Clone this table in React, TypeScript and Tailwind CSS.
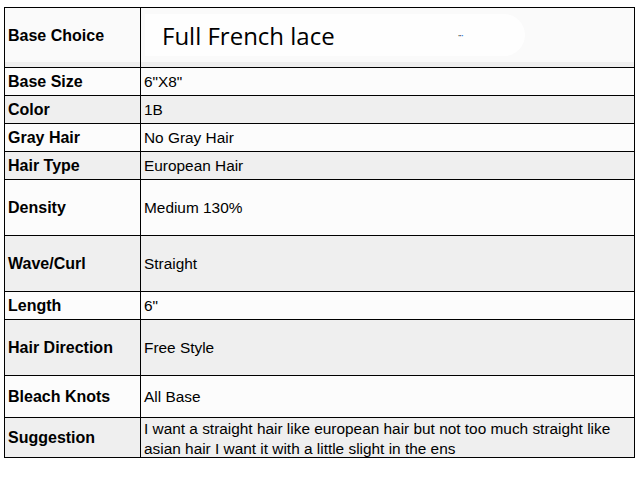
import React from "react";

type Row = { label: string; value: string; h: string; bg: string };

const rows: Row[] = [
  { label: "Base Size", value: "6\"X8\"", h: "h-[28px]", bg: "bg-[#fcfcfc]" },
  { label: "Color", value: "1B", h: "h-[28px]", bg: "bg-[#efefef]" },
  { label: "Gray Hair", value: "No Gray Hair", h: "h-[28px]", bg: "bg-[#fcfcfc]" },
  { label: "Hair Type", value: "European Hair", h: "h-[28px]", bg: "bg-[#efefef]" },
  { label: "Density", value: "Medium 130%", h: "h-[56px]", bg: "bg-[#fcfcfc]" },
  { label: "Wave/Curl", value: "Straight", h: "h-[56px]", bg: "bg-[#efefef]" },
  { label: "Length", value: "6\"", h: "h-[28px]", bg: "bg-[#fcfcfc]" },
  { label: "Hair Direction", value: "Free Style", h: "h-[56px]", bg: "bg-[#efefef]" },
  { label: "Bleach Knots", value: "All Base", h: "h-[42px]", bg: "bg-[#fcfcfc]" },
];

function App() {
  return (
    <div className="w-[638px] h-[484px] bg-white pt-[7px] pl-[4px] font-['Liberation_Sans',Arial,sans-serif] text-[16px] text-black">
      <div className="w-[631px] border-t border-l border-r border-black">
        {/* first row: base choice */}
        <div className="flex h-[60px] border-b border-black bg-[#fafafa]">
          <div className="w-[136px] shrink-0 border-r border-black flex flex-col">
            <div className="flex-1 flex items-center pl-[3px] pt-[1px] font-bold">Base Choice</div>
            <div className="h-[5px] bg-[#efefef]" />
          </div>
          <div className="flex-1 flex flex-col">
            <div className="flex-1 flex items-center pl-[4px]">
              <div className="flex items-center w-[380px] h-[42px] bg-[#fefefe] rounded-r-[40px] pl-[17px] pt-[1px] font-['Open_Sans',sans-serif] text-[24px] leading-none">
                Full French lace
                <span className="ml-[123px] -mt-[2px] text-[10px] text-[#555] tracking-[-1px]">
                  ··<span className="text-[#2a7ae0]">·</span>
                </span>
              </div>
            </div>
            <div className="h-[5px] bg-[#efefef]" />
          </div>
        </div>

        {rows.map((r) => (
          <div key={r.label} className={`flex border-b border-black ${r.h} ${r.bg}`}>
            <div className="w-[136px] shrink-0 border-r border-black flex items-center pl-[3px] font-bold">
              {r.label}
            </div>
            <div className="flex-1 flex items-center pl-[3px] text-[15.4px]">{r.value}</div>
          </div>
        ))}

        <div className="flex h-[40px] border-b border-black bg-[#efefef]">
          <div className="w-[136px] shrink-0 border-r border-black flex items-center pl-[3px] font-bold">
            Suggestion
          </div>
          <div className="flex-1 pl-[3px] pr-[4px] pt-[1px] text-[15.4px] leading-[20px]">
            I want a straight hair like european hair but not too much straight like asian hair I want it with a little slight in the ens
          </div>
        </div>
      </div>
    </div>
  );
}

export default App;
